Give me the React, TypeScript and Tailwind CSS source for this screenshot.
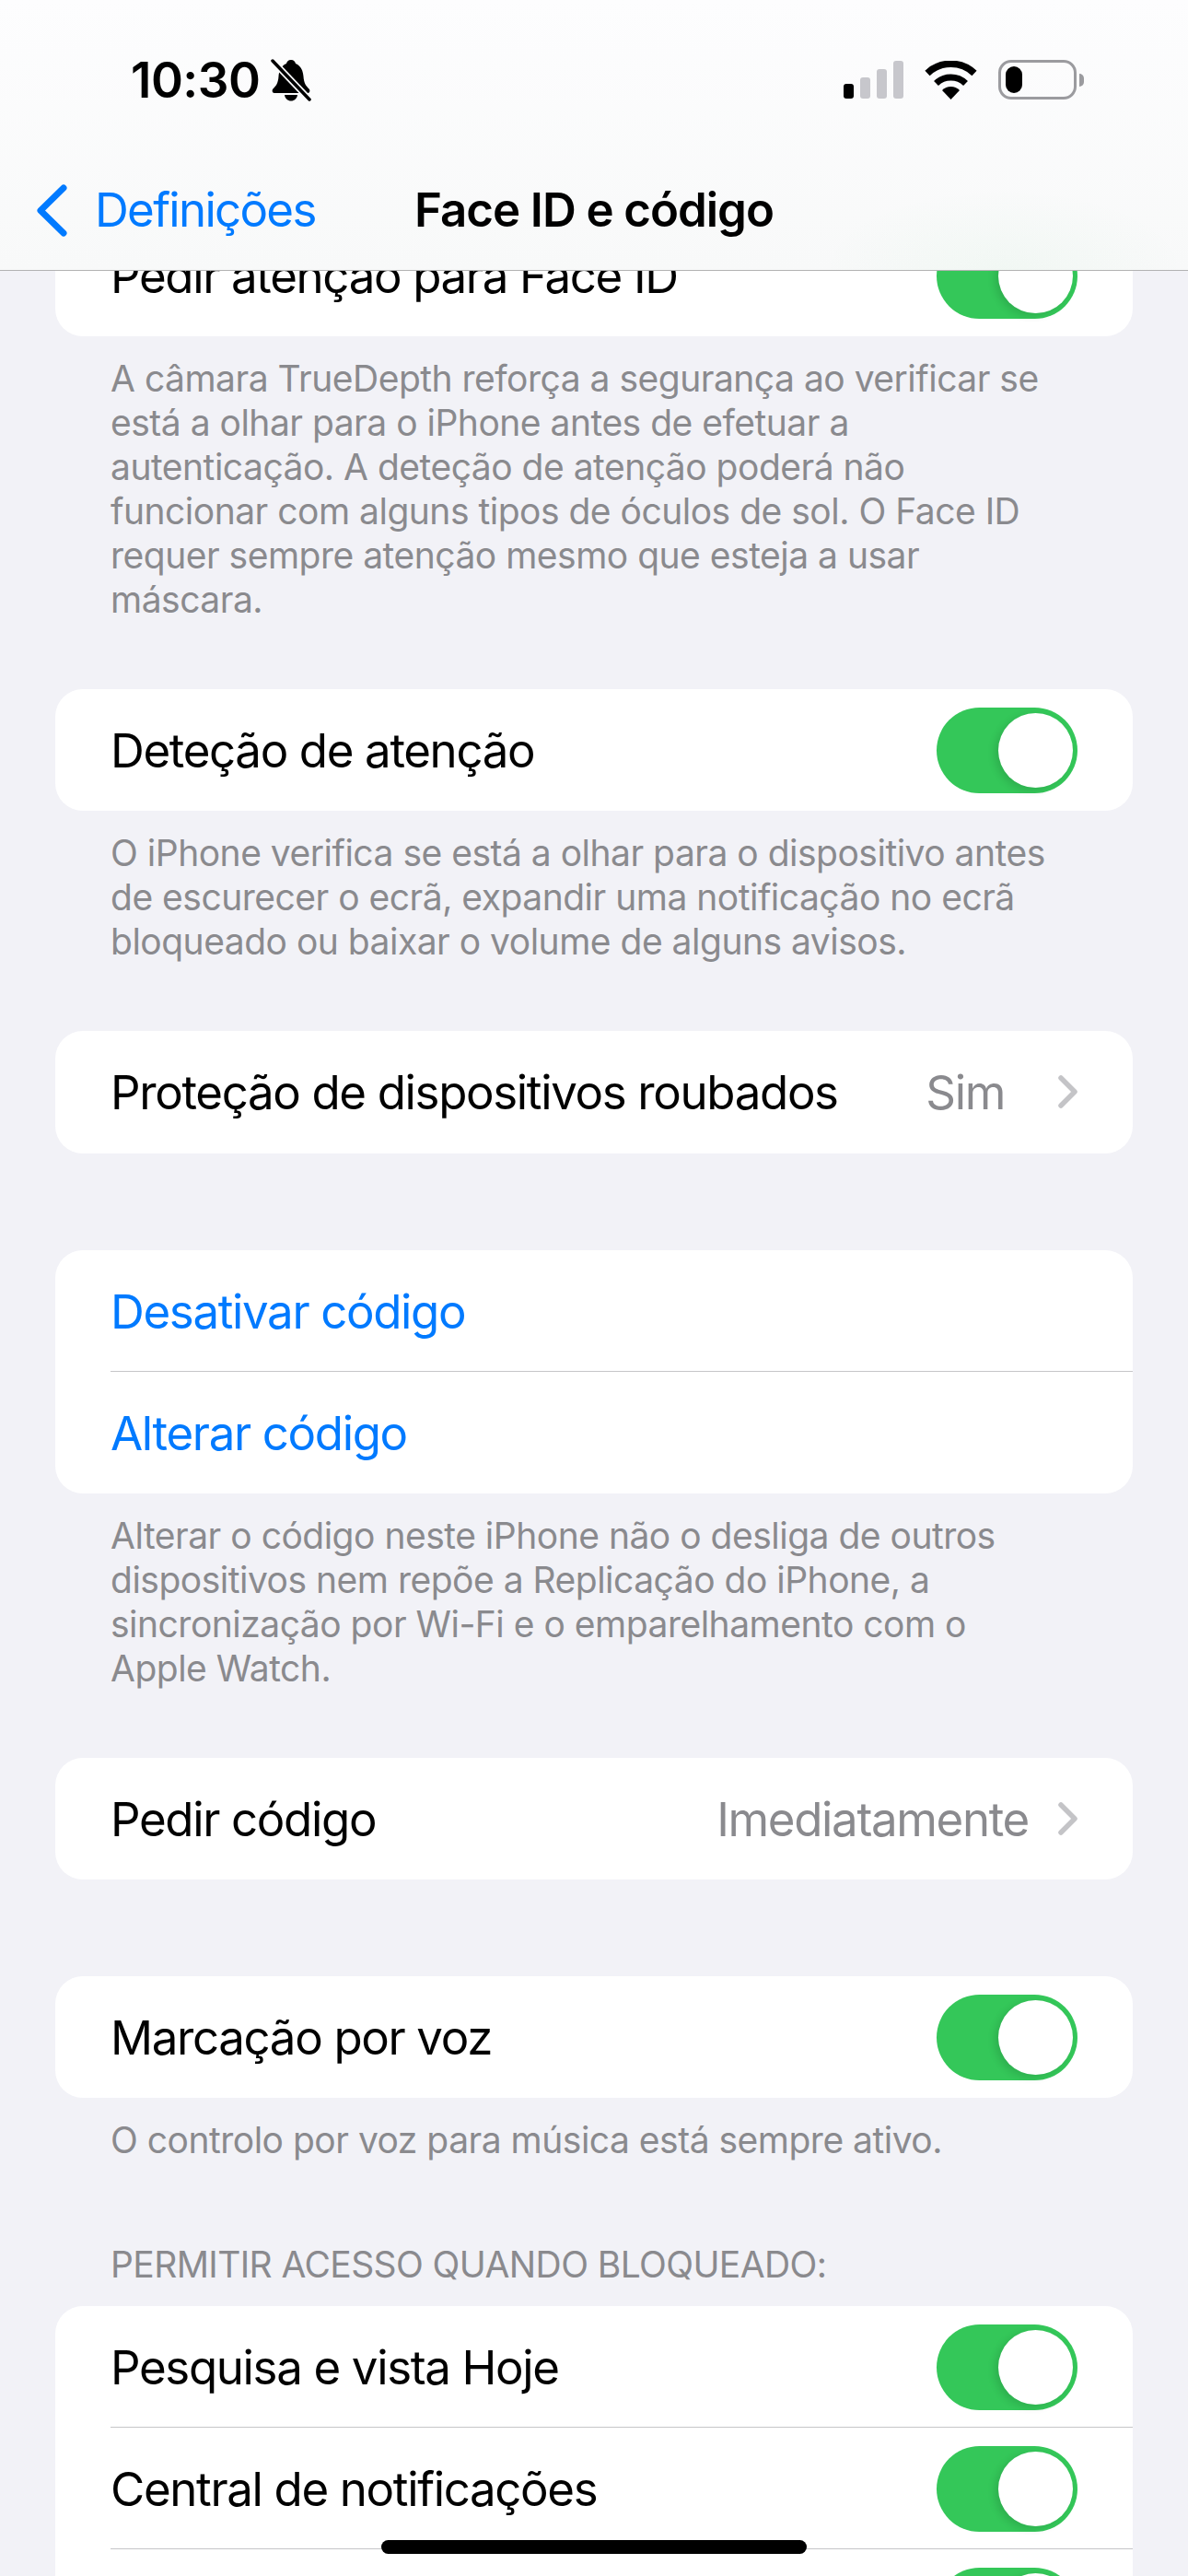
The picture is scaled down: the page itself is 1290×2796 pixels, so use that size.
import React from 'react';

const font = { fontFamily: 'Inter, "Liberation Sans", sans-serif' };

const Toggle: React.FC = () => (
  <div className="relative h-[93px] w-[153px] shrink-0 rounded-full bg-[#34c759]">
    <div className="absolute right-[5px] top-[6px] size-[81px] rounded-full bg-white shadow-[-4px_3px_8px_rgba(0,0,0,0.12)]" />
  </div>
);

const Chevron: React.FC = () => (
  <svg width="21" height="36" viewBox="0 0 21 36" className="shrink-0">
    <path d="M3 3 L18 18 L3 33" fill="none" stroke="#c4c4c7" strokeWidth="5.5" strokeLinecap="round" strokeLinejoin="round" />
  </svg>
);

const Row: React.FC<{ children: React.ReactNode; end?: boolean }> = ({ children, end }) => (
  <div className={`flex h-[132px] items-center px-[60px] ${end ? 'justify-end' : 'justify-between'}`}>{children}</div>
);

const Label: React.FC<{ children: React.ReactNode; blue?: boolean }> = ({ children, blue }) => (
  <span className={`text-[51px] leading-none tracking-[-1.35px] ${blue ? 'text-[#007aff]' : 'text-black'}`}>{children}</span>
);

const Value: React.FC<{ children: React.ReactNode }> = ({ children }) => (
  <span className="text-[51px] leading-none tracking-[-1.35px] text-[#8a8a8e]">{children}</span>
);

const Card: React.FC<{ children: React.ReactNode; className?: string }> = ({ children, className }) => (
  <div className={`overflow-hidden rounded-[30px] bg-white ${className ?? ''}`}>{children}</div>
);

// sits on the last pixel of the row above, rows keep a 132px pitch
const Divider: React.FC = () => <div className="relative -mt-px ml-[60px] h-px bg-[#c6c6c8]" />;

const Footer: React.FC<{ lines: string[] }> = ({ lines }) => (
  <div className="mt-[22px] px-[60px] text-[39px] leading-[48px] tracking-[-0.5px] text-[#8a8a8e]">
    {lines.map(line => (
      <div key={line} className="whitespace-nowrap">{line}</div>
    ))}
  </div>
);

const SignalBars: React.FC = () => (
  <div className="flex items-end gap-[7px]">
    <div className="h-[16px] w-[11px] rounded-[3px] bg-black" />
    <div className="h-[23px] w-[11px] rounded-[3px] bg-[#c7c7cc]" />
    <div className="h-[32px] w-[11px] rounded-[3px] bg-[#c7c7cc]" />
    <div className="h-[41px] w-[11px] rounded-[3px] bg-[#c7c7cc]" />
  </div>
);

const Wifi: React.FC = () => (
  <svg width="57" height="42" viewBox="0 0 57 42">
    <path d="M3 13.5 A37 37 0 0 1 54 13.5" fill="none" stroke="#000" strokeWidth="7.5" />
    <path d="M12.5 24.5 A23 23 0 0 1 44.5 24.5" fill="none" stroke="#000" strokeWidth="7" />
    <path d="M28.5 42 L19 32 A13.5 13.5 0 0 1 38 32 Z" fill="#000" />
  </svg>
);

const Battery: React.FC = () => (
  <div className="flex items-center gap-[3px]">
    <div className="flex h-[43px] w-[85px] items-center rounded-[14px] border-[3px] border-[#9b9b9f] pl-[5px]">
      <div className="h-[29px] w-[18px] rounded-full bg-black" />
    </div>
    <div className="h-[14px] w-[5px] rounded-r-full bg-[#9b9b9f]" />
  </div>
);

const BellSlash: React.FC = () => (
  <svg width="44" height="46" viewBox="0 0 44 46">
    <path d="M22 1 C25 1 26.5 3 27 5 C33 7.5 35 13 35.5 19 C36 26 38 29 42 33 C43 35 42 37 40 37 H4 C2 37 1 35 2 33 C6 29 8 26 8.5 19 C9 13 11 7.5 17 5 C17.5 3 19 1 22 1 Z" fill="#000" />
    <path d="M15 39 H29 C28.5 43 25.5 45.5 22 45.5 C18.5 45.5 15.5 43 15 39 Z" fill="#000" />
    <path d="M1 1 L42 44" stroke="#fdfdfe" strokeWidth="7" />
    <path d="M2 2 L42 44" stroke="#000" strokeWidth="3.5" strokeLinecap="round" />
  </svg>
);

export default function App() {
  return (
    <div className="relative h-[2796px] w-[1290px] overflow-hidden bg-[#f2f2f7]" style={font}>
      <header className="relative z-10 h-[294px] border-b border-[#b2b2b2] bg-[radial-gradient(ellipse_200px_90px_at_1090px_294px,rgba(52,199,89,0.035),transparent),linear-gradient(to_bottom,#fdfdfe,#f8f9f9)]">
        <div className="flex items-start justify-between pl-[142px] pr-[113px] pt-[57px]">
          <div className="flex items-center gap-[12px]">
            <span className="text-[53px] font-semibold leading-[60px] tracking-[-0.5px] text-black">10:30</span>
            <BellSlash />
          </div>
          <div className="flex items-center gap-[23px] pt-[8px]">
            <SignalBars />
            <Wifi />
            <Battery />
          </div>
        </div>
        <div className="relative mt-[81px] flex items-center justify-center">
          <span className="text-[51px] font-semibold leading-[60px] tracking-[-1.05px] text-black">Face ID e código</span>
          <div className="absolute left-[40px] top-0 flex h-[60px] items-center gap-[30px]">
            <svg width="33" height="57" viewBox="0 0 33 57">
              <path d="M29 4 L4 28.5 L29 53" fill="none" stroke="#007aff" strokeWidth="7" strokeLinecap="round" strokeLinejoin="round" />
            </svg>
            <span className="text-[51px] leading-[60px] tracking-[-1.7px] text-[#007aff]">Definições</span>
          </div>
        </div>
      </header>

      <main className="mx-[60px] -mt-[61px]">
        <Card>
          <Row>
            <Label>Pedir atenção para Face ID</Label>
            <Toggle />
          </Row>
        </Card>
        <Footer
          lines={[
            'A câmara TrueDepth reforça a segurança ao verificar se',
            'está a olhar para o iPhone antes de efetuar a',
            'autenticação. A deteção de atenção poderá não',
            'funcionar com alguns tipos de óculos de sol. O Face ID',
            'requer sempre atenção mesmo que esteja a usar',
            'máscara.',
          ]}
        />

        <Card className="mt-[73px]">
          <Row>
            <Label>Deteção de atenção</Label>
            <Toggle />
          </Row>
        </Card>
        <Footer
          lines={[
            'O iPhone verifica se está a olhar para o dispositivo antes',
            'de escurecer o ecrã, expandir uma notificação no ecrã',
            'bloqueado ou baixar o volume de alguns avisos.',
          ]}
        />

        <Card className="mt-[73px] h-[133px]">
          <Row>
            <Label>Proteção de dispositivos roubados</Label>
            <div className="flex items-center gap-[58px]">
              <Value>Sim</Value>
              <Chevron />
            </div>
          </Row>
        </Card>

        <Card className="mt-[105px]">
          <Row>
            <Label blue>Desativar código</Label>
          </Row>
          <Divider />
          <Row>
            <Label blue>Alterar código</Label>
          </Row>
        </Card>
        <Footer
          lines={[
            'Alterar o código neste iPhone não o desliga de outros',
            'dispositivos nem repõe a Replicação do iPhone, a',
            'sincronização por Wi-Fi e o emparelhamento com o',
            'Apple Watch.',
          ]}
        />

        <Card className="mt-[73px]">
          <Row>
            <Label>Pedir código</Label>
            <div className="flex items-center gap-[32px]">
              <Value>Imediatamente</Value>
              <Chevron />
            </div>
          </Row>
        </Card>

        <Card className="mt-[105px]">
          <Row>
            <Label>Marcação por voz</Label>
            <Toggle />
          </Row>
        </Card>
        <Footer lines={['O controlo por voz para música está sempre ativo.']} />

        <div className="mt-[87px] px-[60px] text-[39px] leading-[48px] tracking-[-0.6px] text-[#8a8a8e]">
          PERMITIR ACESSO QUANDO BLOQUEADO:
        </div>
        <Card className="mt-[21px]">
          <Row>
            <Label>Pesquisa e vista Hoje</Label>
            <Toggle />
          </Row>
          <Divider />
          <Row>
            <Label>Central de notificações</Label>
            <Toggle />
          </Row>
          <Divider />
          <Row end>
            <Toggle />
          </Row>
        </Card>
      </main>

      <div className="absolute bottom-[24px] left-[414px] h-[15px] w-[462px] rounded-full bg-black" />
    </div>
  );
}
